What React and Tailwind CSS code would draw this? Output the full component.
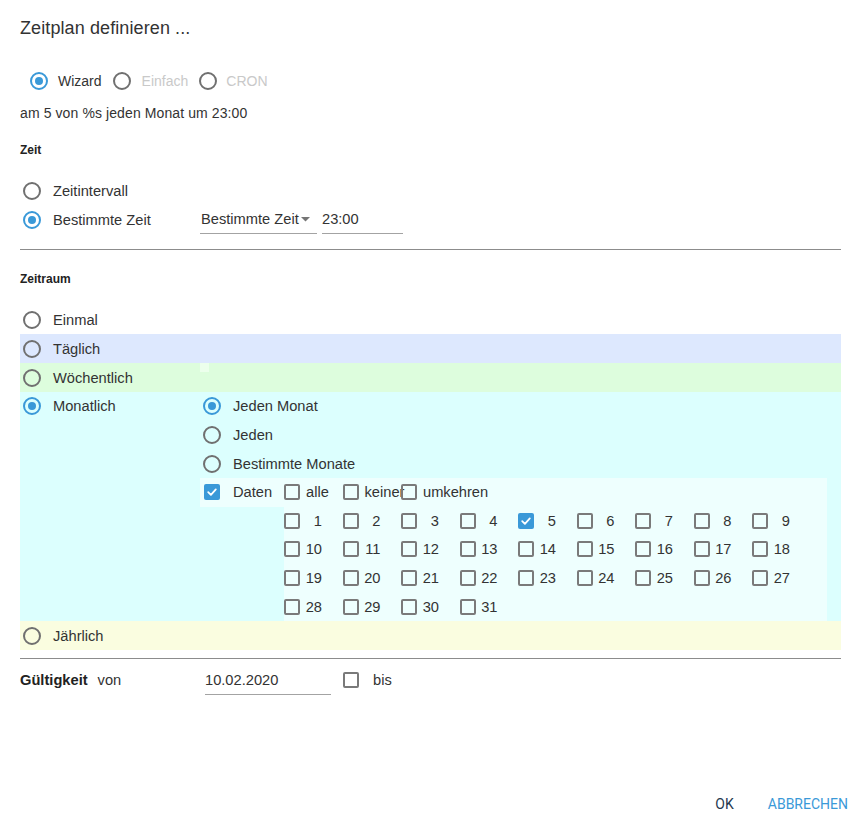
function Radio({ checked }) {
  return (
    <span
      className={`flex h-[18px] w-[18px] shrink-0 items-center justify-center rounded-full border-2 ${
        checked ? "border-[#3a99d8]" : "border-[#707070]"
      }`}
    >
      {checked ? <span className="h-[8px] w-[8px] rounded-full bg-[#3a99d8]" /> : null}
    </span>
  );
}

function Checkbox({ checked }) {
  if (checked) {
    return (
      <span className="flex h-[16px] w-[16px] shrink-0 items-center justify-center rounded-[2px] bg-[#3a99d8]">
        <svg width="12" height="12" viewBox="0 0 12 12" fill="none">
          <path d="M2.2 6.2 L4.9 8.8 L9.8 3.4" stroke="white" strokeWidth="1.8" strokeLinecap="round" strokeLinejoin="round" />
        </svg>
      </span>
    );
  }
  return <span className="block h-[16px] w-[16px] shrink-0 rounded-[2px] border-2 border-[#7a7a7a]" />;
}

function RadioRow({ label, checked, className = "" }) {
  return (
    <div className={`flex h-[29px] items-center pl-[3px] ${className}`}>
      <Radio checked={checked} />
      <span className="ml-[12px]">{label}</span>
    </div>
  );
}

function Underlined({ children, width, className = "" }) {
  return (
    <div className={`flex h-[29px] items-center border-b border-[#a3a3a3] ${width} ${className}`}>{children}</div>
  );
}

const days = Array.from({ length: 31 }, (_, i) => i + 1);
const ROW = "h-[28.625px]";

export default function App() {
  return (
    <div className="min-h-[829px] bg-white px-[20px] font-['Liberation_Sans',Arial,sans-serif] text-[14.667px] text-[#333]">
      <div className="flex h-[57px] items-center text-[18px] tracking-[0.1px] text-[#333]">Zeitplan definieren ...</div>

      <div className="flex h-[48px] items-center pl-[10px] text-[14px]">
        <Radio checked />
        <span className="ml-[10px] mr-[11px]">Wizard</span>
        <Radio />
        <span className="ml-[11px] mr-[11px] text-[#c9c9c9]">Einfach</span>
        <Radio />
        <span className="ml-[9px] text-[#c9c9c9]">CRON</span>
      </div>

      <div className="flex h-[16px] items-center text-[14px] tracking-[0.1px]">am 5 von %s jeden Monat um 23:00</div>

      <div className="mt-[21px] flex h-[16px] items-center text-[12px] font-bold text-[#222]">Zeit</div>

      <div className="mt-[18px]">
        <RadioRow label="Zeitintervall" />
        <div className="flex h-[29px] items-center">
          <div className="flex w-[180px] items-center pl-[3px]">
            <Radio checked />
            <span className="ml-[12px]">Bestimmte Zeit</span>
          </div>
          <Underlined width="w-[117px]" className="justify-between pl-[1px] pr-[7px]">
            <span>Bestimmte Zeit</span>
            <svg width="9" height="5" viewBox="0 0 9 5">
              <path d="M0 0 L9 0 L4.5 4.5 Z" fill="#757575" />
            </svg>
          </Underlined>
          <Underlined width="w-[81px]" className="ml-[5px]">
            <span>23:00</span>
          </Underlined>
        </div>
      </div>

      <div className="mt-[15px] border-t border-[#8c8c8c]" />

      <div className="mt-[21px] flex h-[16px] items-center text-[12px] font-bold text-[#222]">Zeitraum</div>

      <div className="mt-[18px]">
        <RadioRow label="Einmal" />
        <RadioRow label="Täglich" className="bg-[#dde8fe]" />
        <div className="flex h-[29px] bg-[#ddfddd]">
          <div className="flex w-[180px] items-center pl-[3px]">
            <Radio />
            <span className="ml-[12px]">Wöchentlich</span>
          </div>
          <span className="h-[9px] w-[9px] bg-[#ecffec]" />
        </div>

        <div className="flex bg-[#dcfffe]">
          <div className={`flex w-[180px] items-center self-start pl-[3px] ${ROW}`}>
            <Radio checked />
            <span className="ml-[12px]">Monatlich</span>
          </div>
          <div className="flex flex-col">
            <div className={`flex items-center pl-[3px] ${ROW}`}>
              <Radio checked />
              <span className="ml-[12px]">Jeden Monat</span>
            </div>
            <div className={`flex items-center pl-[3px] ${ROW}`}>
              <Radio />
              <span className="ml-[12px]">Jeden</span>
            </div>
            <div className={`flex items-center pl-[3px] ${ROW}`}>
              <Radio />
              <span className="ml-[12px]">Bestimmte Monate</span>
            </div>
            <div className={`flex w-[627px] items-center bg-[#eefffe] ${ROW}`}>
              <div className="flex w-[84px] items-center pl-[4px]">
                <Checkbox checked />
                <span className="ml-[13px]">Daten</span>
              </div>
              {["alle", "keiner", "umkehren"].map((label) => (
                <div key={label} className="flex w-[58.5px] items-center">
                  <Checkbox />
                  <span className="ml-[6px] whitespace-nowrap">{label}</span>
                </div>
              ))}
            </div>
            <div className="ml-[84px] grid w-[543px] grid-cols-[repeat(9,58.5px)] bg-[#eefffe]">
              {days.map((d) => (
                <div key={d} className={`flex items-center ${ROW}`}>
                  <Checkbox checked={d === 5} />
                  <span className="ml-[5px] w-[17px] text-right">{d}</span>
                </div>
              ))}
            </div>
          </div>
        </div>

        <RadioRow label="Jährlich" className="bg-[#fafde0]" />
      </div>

      <div className="mt-[8px] border-t border-[#8c8c8c]" />

      <div className="mt-[6px] flex h-[30px] items-center">
        <div className="flex w-[185px] items-center">
          <span className="font-bold text-[#222]">Gültigkeit</span>
          <span className="ml-[10px]">von</span>
        </div>
        <Underlined width="w-[126px]">
          <span>10.02.2020</span>
        </Underlined>
        <span className="ml-[12px] flex">
          <Checkbox />
        </span>
        <span className="ml-[14px]">bis</span>
      </div>

      <div className="mt-[91px] flex h-[36px] items-center justify-end gap-[34px] font-['Roboto',sans-serif] text-[14px]">
        <button className="text-[#26394f]">OK</button>
        <button className="mr-[-7px] text-[#3a99d8]">ABBRECHEN</button>
      </div>
    </div>
  );
}
